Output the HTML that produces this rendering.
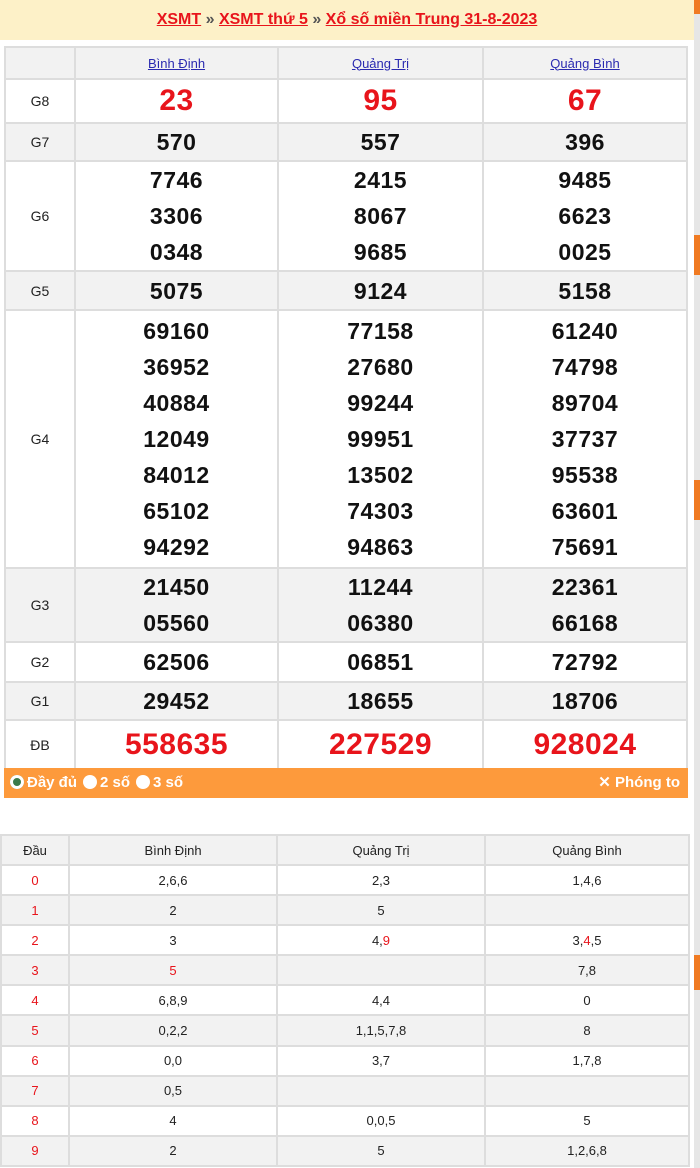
<!DOCTYPE html>
<html><head><meta charset="utf-8"><style>
*{margin:0;padding:0;box-sizing:border-box}
body{width:700px;height:1168px;background:#fff;font-family:"Liberation Sans",Arial,sans-serif;position:relative;overflow:hidden}
.hdr{position:absolute;left:0;top:0;width:694px;height:40px;background:#fdf1c8;text-align:center;font-size:16px;font-weight:bold;line-height:40px;color:#555}
.hdr a{color:#e8141b;text-decoration:underline}
.side{position:absolute;left:694px;top:0;width:6px;height:1168px;background:#e6e6e6}
.side i{position:absolute;left:0;width:6px;background:#f07a22}
table{border-collapse:collapse;position:absolute}
#t1{left:4px;top:46px;width:684px}
#t1 td{border:2px solid #ddd;text-align:center;vertical-align:middle;padding:0}
#t1 td.l{width:70px;font-size:14px;color:#222}
#t1 .n{font-size:23px;font-weight:bold;color:#111;line-height:36px;letter-spacing:0.5px}
#t1 .r{color:#e8141b;font-size:30px}
#t1 .g td{background:#f2f2f2}
#t1 th{border:2px solid #ddd;background:#f2f2f2;height:32px;font-weight:normal;font-size:13px;padding:0}
#t1 th a{color:#2a2ab0;text-decoration:underline}
.bar{position:absolute;left:4px;top:768px;width:684px;height:30px;background:#fd9a3c;color:#fff;font-weight:bold;font-size:15px;line-height:30px}
.dot{display:inline-block;width:14px;height:14px;border-radius:50%;background:#fff;vertical-align:-2px;margin:0 3px 0 6px}
#t2{left:0;top:834px;width:690px}
#t2 td,#t2 th{border:2px solid #ddd;text-align:center;font-size:13px;height:30.1px;color:#222;padding:0}
#t2 th{background:#f2f2f2;font-weight:normal;height:30px}
#t2 tr:nth-child(odd) td{background:#f2f2f2}
#t2 td:first-child{color:#e8141b;width:68px}
.rd{color:#e8141b}
</style></head><body>
<div class="hdr"><a>XSMT</a> » <a>XSMT thứ 5</a> » <a>Xổ số miền Trung 31-8-2023</a></div>
<div class="side"><i style="top:0;height:14px"></i><i style="top:235px;height:40px"></i><i style="top:480px;height:40px"></i><i style="top:955px;height:35px"></i></div>
<table id="t1">
<tr><th style="width:70px"></th><th style="width:203px"><a>Bình Định</a></th><th style="width:205px"><a>Quảng Trị</a></th><th><a>Quảng Bình</a></th></tr>
<tr style="height:44px"><td class="l">G8</td><td class="n r">23</td><td class="n r">95</td><td class="n r">67</td></tr>
<tr class="g" style="height:38px"><td class="l">G7</td><td class="n">570</td><td class="n">557</td><td class="n">396</td></tr>
<tr style="height:110px"><td class="l">G6</td><td class="n">7746<br>3306<br>0348</td><td class="n">2415<br>8067<br>9685</td><td class="n">9485<br>6623<br>0025</td></tr>
<tr class="g" style="height:39px"><td class="l">G5</td><td class="n">5075</td><td class="n">9124</td><td class="n">5158</td></tr>
<tr style="height:258px"><td class="l">G4</td><td class="n">69160<br>36952<br>40884<br>12049<br>84012<br>65102<br>94292</td><td class="n">77158<br>27680<br>99244<br>99951<br>13502<br>74303<br>94863</td><td class="n">61240<br>74798<br>89704<br>37737<br>95538<br>63601<br>75691</td></tr>
<tr class="g" style="height:73px"><td class="l">G3</td><td class="n">21450<br>05560</td><td class="n">11244<br>06380</td><td class="n">22361<br>66168</td></tr>
<tr style="height:40px"><td class="l">G2</td><td class="n">62506</td><td class="n">06851</td><td class="n">72792</td></tr>
<tr class="g" style="height:38px"><td class="l">G1</td><td class="n">29452</td><td class="n">18655</td><td class="n">18706</td></tr>
<tr style="height:50px"><td class="l">ĐB</td><td class="n r">558635</td><td class="n r">227529</td><td class="n r">928024</td></tr>
</table>
<div class="bar"><span class="dot" style="margin-left:6px;box-shadow:inset 0 0 0 3px #fff;background:#3a7a4a"></span>Đầy đủ<span class="dot"></span>2 số<span class="dot"></span>3 số<span style="position:absolute;right:8px">✕ Phóng to</span></div>
<table id="t2">
<tr><th style="width:68px">Đầu</th><th style="width:208px">Bình Định</th><th style="width:208px">Quảng Trị</th><th>Quảng Bình</th></tr>
<tr><td>0</td><td>2,6,6</td><td>2,3</td><td>1,4,6</td></tr>
<tr><td>1</td><td>2</td><td>5</td><td></td></tr>
<tr><td>2</td><td>3</td><td>4,<span class="rd">9</span></td><td>3,<span class="rd">4</span>,5</td></tr>
<tr><td>3</td><td><span class="rd">5</span></td><td></td><td>7,8</td></tr>
<tr><td>4</td><td>6,8,9</td><td>4,4</td><td>0</td></tr>
<tr><td>5</td><td>0,2,2</td><td>1,1,5,7,8</td><td>8</td></tr>
<tr><td>6</td><td>0,0</td><td>3,7</td><td>1,7,8</td></tr>
<tr><td>7</td><td>0,5</td><td></td><td></td></tr>
<tr><td>8</td><td>4</td><td>0,0,5</td><td>5</td></tr>
<tr><td>9</td><td>2</td><td>5</td><td>1,2,6,8</td></tr>
</table>
</body></html>
